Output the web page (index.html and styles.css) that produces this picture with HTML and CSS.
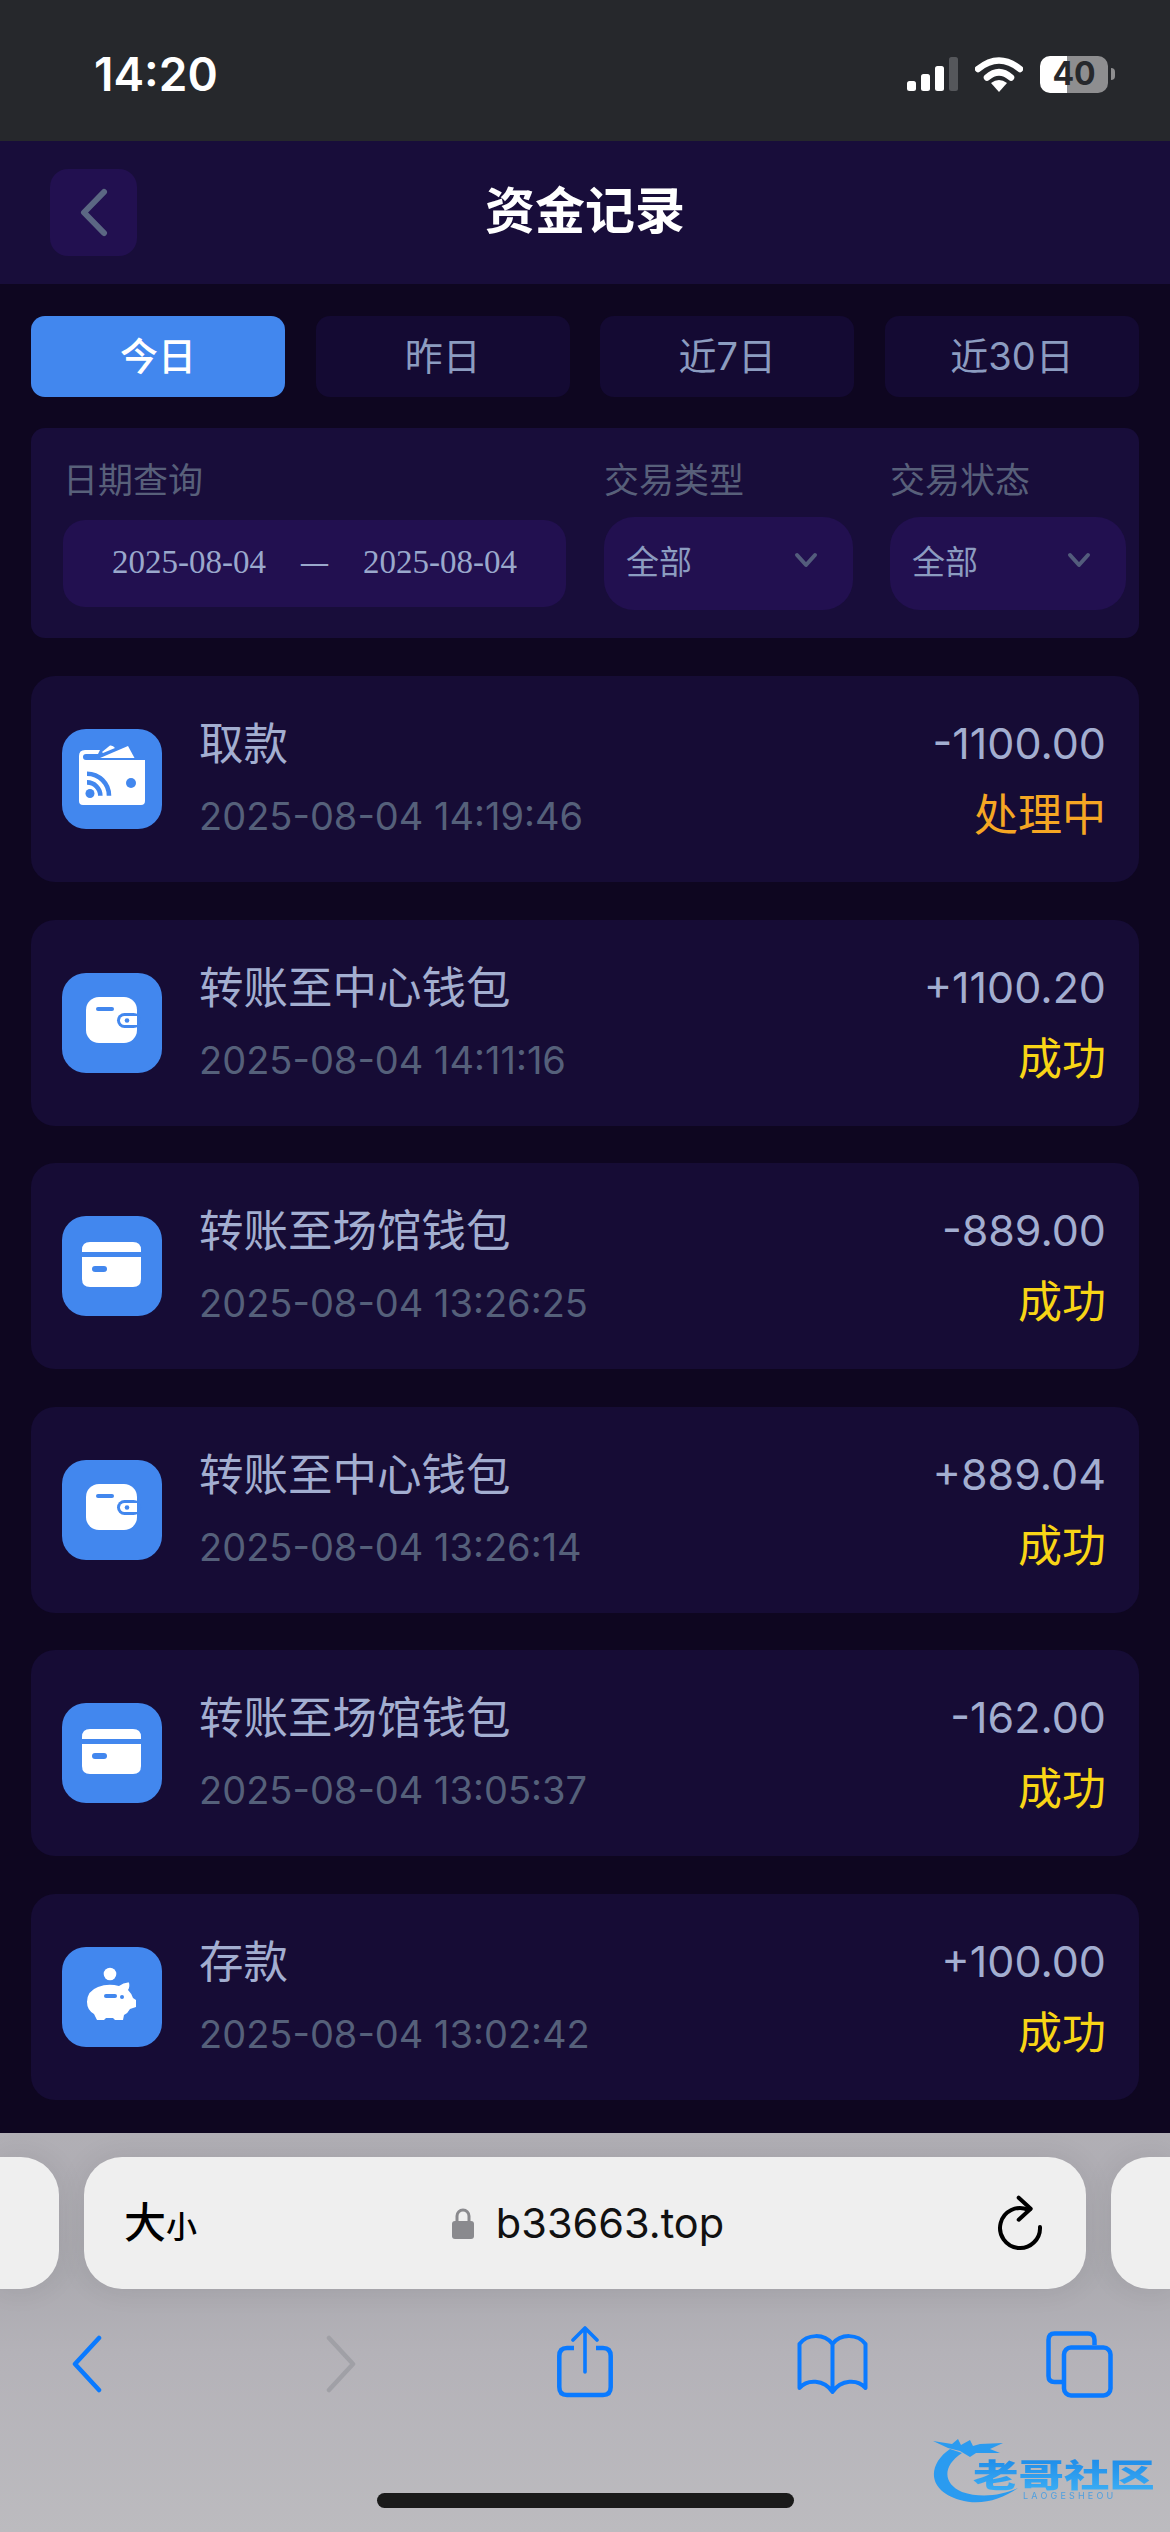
FILE: index.html
```html
<!DOCTYPE html>
<html lang="zh-CN">
<head>
    <meta charset="UTF-8">
    <meta name="viewport" content="width=device-width, initial-scale=1.0">
    <title>资金记录</title>
    <link rel="stylesheet" href="styles.css">
</head>
<body>
    <!-- Shared card icons -->
    <svg class="icon-defs" xmlns="http://www.w3.org/2000/svg">
        <symbol id="icon-withdraw" viewBox="0 0 100 100">
            <path d="M17 34 V27 Q17 21 23 21 H38 L36 25 H24 Q21 25 21 28 Q21 31 24 31 H83 Q83 31 83 36 V72 Q83 76 79 76 H21 Q17 76 17 72 Z" fill="#fff"/>
            <path d="M38 29 L66 17 L72.5 29 Z" fill="#fff"/>
            <path d="M40 23 L48 16.5 Q51 16 53 19 L41 24 Z" fill="#fff"/>
            <circle cx="69" cy="54" r="5" fill="#4287ee"/>
            <circle cx="28" cy="64.5" r="4.5" fill="#4287ee"/>
            <path d="M25 44.7 A22 22 0 0 1 47 66.7 M25 53.4 A13.3 13.3 0 0 1 38.3 66.7" fill="none" stroke="#4287ee" stroke-width="4.6"/>
        </symbol>
        <symbol id="icon-wallet" viewBox="0 0 100 100">
            <rect x="24" y="24" width="51" height="46" rx="13" fill="#fff"/>
            <rect x="34" y="34" width="18" height="4" rx="2" fill="#4287ee"/>
            <rect x="55" y="40" width="24" height="15" rx="7.5" fill="#4287ee"/>
            <path d="M75 43 H62.5 A4.5 4.5 0 0 0 62.5 52 H75 Z" fill="#fff"/>
            <circle cx="65" cy="47.5" r="2.3" fill="#4287ee"/>
        </symbol>
        <symbol id="icon-card" viewBox="0 0 100 100">
            <path d="M20 36 V34 Q20 26 28 26 H71 Q79 26 79 34 V36 Z" fill="#fff"/>
            <path d="M20 41 H79 V63 Q79 71 71 71 H28 Q20 71 20 63 Z" fill="#fff"/>
            <rect x="30" y="50" width="15" height="6" rx="3" fill="#4287ee"/>
        </symbol>
        <symbol id="icon-piggy" viewBox="0 0 100 100">
            <circle cx="48" cy="27" r="6.3" fill="#fff"/>
            <path d="M25 55 Q25 44 36 40 Q46 36 57 39 Q62 35 67 35.5 Q68 40 66 43 Q70 47 71 51 L74 53 V60 L68 62 Q66 66 62 68 L61 73 H53 L51 71 H44 L42 73 H35 L32 67 Q25 63 25 55 Z" fill="#fff"/>
            <rect x="42" y="47" width="13" height="4" rx="2" fill="#4287ee"/>
            <circle cx="60" cy="50" r="2" fill="#4287ee"/>
        </symbol>
    </svg>

    <!-- Phone status bar -->
    <div class="status-bar">
        <span class="status-time">14:20</span>
        <div class="status-icons">
            <svg class="signal" viewBox="0 0 51 34" xmlns="http://www.w3.org/2000/svg">
                <rect x="0" y="24" width="9" height="10" rx="2.5" fill="#fff"/>
                <rect x="14" y="17" width="9" height="17" rx="2.5" fill="#fff"/>
                <rect x="28" y="9" width="9" height="25" rx="2.5" fill="#fff"/>
                <rect x="42" y="0" width="9" height="34" rx="2.5" fill="#55575b"/>
            </svg>
            <svg class="wifi" viewBox="0 0 48 36" xmlns="http://www.w3.org/2000/svg">
                <path d="M3 13 Q24 -4 45 13" fill="none" stroke="#fff" stroke-width="6.5" stroke-linecap="round"/>
                <path d="M12 21.5 Q24 11 36 21.5" fill="none" stroke="#fff" stroke-width="6.5" stroke-linecap="round"/>
                <path d="M16 27 Q24 21 32 27 L24 36 Z" fill="#fff"/>
            </svg>
            <div class="battery">
                <div class="battery-cell"><span class="battery-level">40</span></div>
                <div class="battery-nub"></div>
            </div>
        </div>
    </div>

    <!-- Header -->
    <header class="page-header">
        <button class="back-btn">
            <svg viewBox="0 0 31 49" xmlns="http://www.w3.org/2000/svg">
                <path d="M26 4 L6 24.5 L26 45" fill="none" stroke="#5b6783" stroke-width="6" stroke-linecap="round" stroke-linejoin="round"/>
            </svg>
        </button>
        <h1 class="page-title">资金记录</h1>
    </header>

    <main class="page-body">
        <!-- Date tabs -->
        <div class="tabs">
            <div class="tab tab-active">今日</div>
            <div class="tab">昨日</div>
            <div class="tab">近7日</div>
            <div class="tab">近30日</div>
        </div>

        <!-- Filters -->
        <section class="filters">
            <div class="filter filter-date">
                <label class="filter-label">日期查询</label>
                <div class="date-range">
                    <span>2025-08-04</span>
                    <span class="date-dash">—</span>
                    <span>2025-08-04</span>
                </div>
            </div>
            <div class="filter filter-type">
                <label class="filter-label">交易类型</label>
                <div class="select">
                    <span>全部</span>
                    <svg class="select-arrow" viewBox="0 0 24 16" xmlns="http://www.w3.org/2000/svg"><path d="M3 3 L12 13 L21 3" fill="none" stroke="#535c7c" stroke-width="4" stroke-linecap="round" stroke-linejoin="round"/></svg>
                </div>
            </div>
            <div class="filter filter-status">
                <label class="filter-label">交易状态</label>
                <div class="select">
                    <span>全部</span>
                    <svg class="select-arrow" viewBox="0 0 24 16" xmlns="http://www.w3.org/2000/svg"><path d="M3 3 L12 13 L21 3" fill="none" stroke="#535c7c" stroke-width="4" stroke-linecap="round" stroke-linejoin="round"/></svg>
                </div>
            </div>
        </section>

        <!-- Records -->
        <section class="records">
            <article class="record">
                <svg class="record-icon"><use href="#icon-withdraw"/></svg>
                <div class="record-info">
                    <div class="record-title">取款</div>
                    <div class="record-date">2025-08-04 14:19:46</div>
                </div>
                <div class="record-side">
                    <div class="record-amount">-1100.00</div>
                    <div class="record-status pending">处理中</div>
                </div>
            </article>
            <article class="record">
                <svg class="record-icon"><use href="#icon-wallet"/></svg>
                <div class="record-info">
                    <div class="record-title">转账至中心钱包</div>
                    <div class="record-date">2025-08-04 14:11:16</div>
                </div>
                <div class="record-side">
                    <div class="record-amount">+1100.20</div>
                    <div class="record-status success">成功</div>
                </div>
            </article>
            <article class="record">
                <svg class="record-icon"><use href="#icon-card"/></svg>
                <div class="record-info">
                    <div class="record-title">转账至场馆钱包</div>
                    <div class="record-date">2025-08-04 13:26:25</div>
                </div>
                <div class="record-side">
                    <div class="record-amount">-889.00</div>
                    <div class="record-status success">成功</div>
                </div>
            </article>
            <article class="record">
                <svg class="record-icon"><use href="#icon-wallet"/></svg>
                <div class="record-info">
                    <div class="record-title">转账至中心钱包</div>
                    <div class="record-date">2025-08-04 13:26:14</div>
                </div>
                <div class="record-side">
                    <div class="record-amount">+889.04</div>
                    <div class="record-status success">成功</div>
                </div>
            </article>
            <article class="record">
                <svg class="record-icon"><use href="#icon-card"/></svg>
                <div class="record-info">
                    <div class="record-title">转账至场馆钱包</div>
                    <div class="record-date">2025-08-04 13:05:37</div>
                </div>
                <div class="record-side">
                    <div class="record-amount">-162.00</div>
                    <div class="record-status success">成功</div>
                </div>
            </article>
            <article class="record">
                <svg class="record-icon"><use href="#icon-piggy"/></svg>
                <div class="record-info">
                    <div class="record-title">存款</div>
                    <div class="record-date">2025-08-04 13:02:42</div>
                </div>
                <div class="record-side">
                    <div class="record-amount">+100.00</div>
                    <div class="record-status success">成功</div>
                </div>
            </article>
        </section>
    </main>

    <!-- Browser chrome -->
    <footer class="browser">
        <div class="address-row">
            <div class="address-pill address-prev"></div>
            <div class="address-pill address-main">
                <div class="text-size"><span class="text-big">大</span><span class="text-small">小</span></div>
                <div class="address-url">
                    <svg class="lock" viewBox="0 0 22 32" xmlns="http://www.w3.org/2000/svg">
                        <path d="M5 15 V9 A6 6 0 0 1 17 9 V15" fill="none" stroke="#8a8a8e" stroke-width="3"/>
                        <rect x="0" y="14" width="22" height="18" rx="3" fill="#8a8a8e"/>
                    </svg>
                    <span>b33663.top</span>
                </div>
                <svg class="reload" viewBox="0 0 50 58" xmlns="http://www.w3.org/2000/svg">
                    <path d="M44 33 A20 20 0 1 1 32 15.7 L34 15" fill="none" stroke="#000" stroke-width="4" stroke-linecap="round"/>
                    <path d="M22.7 3.7 L34.7 14.7 L22.7 25.7" fill="none" stroke="#000" stroke-width="4" stroke-linecap="round" stroke-linejoin="round"/>
                </svg>
            </div>
            <div class="address-pill address-next"></div>
        </div>

        <nav class="toolbar">
            <svg class="tool tool-nav" viewBox="0 0 30 72" xmlns="http://www.w3.org/2000/svg">
                <path d="M27 12 L3 38 L27 64" fill="none" stroke="#0a7aff" stroke-width="4.5" stroke-linecap="round" stroke-linejoin="round"/>
            </svg>
            <svg class="tool tool-nav" viewBox="0 0 30 72" xmlns="http://www.w3.org/2000/svg">
                <path d="M3 12 L27 38 L3 64" fill="none" stroke="#a0a0a6" stroke-width="4.5" stroke-linecap="round" stroke-linejoin="round"/>
            </svg>
            <svg class="tool tool-share" viewBox="0 0 56 72" xmlns="http://www.w3.org/2000/svg">
                <path d="M17 22 H10 Q2.3 22 2.3 30 V61 Q2.3 69 10 69 H46 Q53.7 69 53.7 61 V30 Q53.7 22 46 22 H39" fill="none" stroke="#0a7aff" stroke-width="4.5"/>
                <path d="M28 2 V46 M16 14 L28 2 L40 14" fill="none" stroke="#0a7aff" stroke-width="3.6" stroke-linecap="round" stroke-linejoin="round"/>
            </svg>
            <svg class="tool tool-book" viewBox="0 0 71 72" xmlns="http://www.w3.org/2000/svg">
                <path d="M35.5 18 C27 7 10 8 2.5 18 V62 C10 53 27 53 35.5 66 C44 53 61 53 68.5 62 V18 C61 8 44 7 35.5 18 V66" fill="none" stroke="#0a7aff" stroke-width="4" stroke-linecap="round" stroke-linejoin="round"/>
            </svg>
            <svg class="tool tool-tabs" viewBox="0 0 67 72" xmlns="http://www.w3.org/2000/svg">
                <path d="M48.5 19 V14 Q48.5 7.5 42 7.5 H8.5 Q2.5 7.5 2.5 14 V50 Q2.5 56 8.5 56 H18" fill="none" stroke="#0a7aff" stroke-width="4.5"/>
                <rect x="18" y="21.5" width="46.5" height="48" rx="7" fill="none" stroke="#0a7aff" stroke-width="4.5"/>
            </svg>
        </nav>

        <div class="home-indicator"></div>
    </footer>

    <!-- Watermark over the browser bar -->
    <div class="watermark">
        <svg class="watermark-dragon" viewBox="0 0 270 112" xmlns="http://www.w3.org/2000/svg">
            <path d="M50 29 C28 44 26 70 60 80 C80 86 100 80 118 68 C100 76 80 78 62 72 C43 64 42 46 62 33 Z" fill="#2a9bf0"/>
            <path d="M33 21 L52 24 L58 19 L61 25 L70 20 L73 26 L80 24 L103 23 L90 29 L100 33 L76 33 L70 37 L60 31 L48 28 Z" fill="#2a9bf0"/>
        </svg>
        <span class="watermark-name">老哥社区</span>
        <span class="watermark-sub">LAOGESHEOU</span>
    </div>
</body>
</html>
```

FILE: styles.css
```css
* {
    margin: 0;
    padding: 0;
    box-sizing: border-box;
}

body {
    width: 1170px;
    height: 2532px;
    display: flex;
    flex-direction: column;
    position: relative;
    overflow: hidden;
    background: #0e0620;
    font-family: 'Inter', 'Noto Sans CJK SC', sans-serif;
}

.icon-defs {
    display: none;
}

/* Status bar */
.status-bar {
    height: 141px;
    flex-shrink: 0;
    display: flex;
    justify-content: space-between;
    align-items: center;
    padding: 7px 55px 0 94px;
    background: #26282c;
}

.status-time {
    color: #fff;
    font-size: 46px;
    font-weight: 600;
    line-height: 1;
}

.status-icons {
    display: flex;
    align-items: center;
    gap: 17px;
}

.signal {
    width: 51px;
    height: 34px;
}

.wifi {
    width: 48px;
    height: 36px;
}

.battery {
    display: flex;
    align-items: center;
    gap: 3px;
}

.battery-cell {
    width: 68px;
    height: 37px;
    display: flex;
    justify-content: center;
    align-items: center;
    border-radius: 10px;
    background: linear-gradient(90deg, #fff 0%, #fff 40%, #8e8e90 40%, #8e8e90 100%);
}

.battery-level {
    color: #26282c;
    font-size: 32px;
    font-weight: 700;
    line-height: 1;
}

.battery-nub {
    width: 4px;
    height: 12px;
    border-radius: 0 6px 6px 0;
    background: #8e8e90;
}

/* Header */
.page-header {
    height: 143px;
    flex-shrink: 0;
    display: grid;
    grid-template-columns: 137px 1fr 137px;
    align-items: center;
    padding-left: 50px;
    background: #180d3a;
}

.back-btn {
    width: 87px;
    height: 87px;
    display: flex;
    justify-content: center;
    align-items: center;
    border: none;
    border-radius: 18px;
    background: #221050;
}

.back-btn svg {
    width: 31px;
    height: 49px;
}

.page-title {
    grid-column: 2;
    margin-left: -50px;
    padding-bottom: 3px;
    text-align: center;
    color: #fff;
    font-size: 50px;
    font-weight: 700;
    line-height: 1;
}

/* Body */
.page-body {
    height: 1849px;
    flex-shrink: 0;
    overflow: hidden;
    padding: 32px 31px 0;
}

.tabs {
    display: grid;
    grid-template-columns: repeat(4, 254px);
    justify-content: space-between;
}

.tab {
    height: 81px;
    display: flex;
    justify-content: center;
    align-items: center;
    padding-bottom: 6px;
    border-radius: 14px;
    background: #140a33;
    color: #8c9cc0;
    font-size: 38px;
}

.tab-active {
    background: #4287ee;
    color: #fff;
    font-weight: 500;
}

/* Filters */
.filters {
    height: 210px;
    margin-top: 31px;
    display: flex;
    padding: 32px 13px 0 32px;
    border-radius: 14px;
    background: #180d3a;
}

.filter-date {
    width: 503px;
    margin-right: 38px;
}

.filter-type {
    width: 249px;
    margin-right: 37px;
}

.filter-status {
    width: 236px;
}

.filter-label {
    display: block;
    height: 40px;
    line-height: 40px;
    color: #58607a;
    font-size: 35px;
}

.date-range {
    height: 87px;
    margin-top: 20px;
    display: flex;
    justify-content: center;
    align-items: center;
    gap: 35px;
    padding-bottom: 2px;
    border-radius: 22px;
    background: #221050;
    color: #9aa8cc;
    font-family: 'Liberation Serif', serif;
    font-size: 33px;
}

.date-dash {
    font-size: 27px;
    font-weight: 700;
}

.select {
    height: 93px;
    margin-top: 17px;
    display: flex;
    justify-content: space-between;
    align-items: center;
    padding: 0 35px 8px 22px;
    border-radius: 30px;
    background: #221050;
    color: #8c9cc0;
    font-size: 33px;
}

.select-arrow {
    width: 24px;
    height: 16px;
}

/* Records */
.records {
    margin-top: 38px;
    display: flex;
    flex-direction: column;
    gap: 37.6px;
}

.record {
    height: 206px;
    flex-shrink: 0;
    display: flex;
    align-items: center;
    padding: 0 33px 0 31px;
    border-radius: 24px;
    background: #160c35;
}

.record-icon {
    width: 100px;
    height: 100px;
    flex-shrink: 0;
    margin-right: 37px;
    border-radius: 24px;
    background: #4287ee;
}

.record-info {
    flex: 1;
    padding-bottom: 6px;
}

.record-title {
    height: 60px;
    line-height: 60px;
    color: #a3aed0;
    font-size: 44.5px;
}

.record-date {
    height: 44px;
    margin-top: 20px;
    line-height: 44px;
    color: #55607a;
    font-size: 38px;
}

.record-side {
    text-align: right;
}

.record-amount {
    height: 60px;
    line-height: 60px;
    color: #a3aed0;
    font-size: 43px;
}

.record-status {
    height: 60px;
    margin-top: 12px;
    line-height: 60px;
    font-size: 44px;
}

.pending {
    color: #f5a623;
}

.success {
    color: #f8d516;
}

/* Browser chrome */
.browser {
    flex: 1;
    padding-top: 24px;
    background: linear-gradient(180deg, #b1afb5 0%, #abaab0 35%, #b4b2b8 55%, #bcbbbf 100%);
}

.address-row {
    display: flex;
    gap: 25px;
}

.address-pill {
    height: 132px;
    flex-shrink: 0;
    background: #efefef;
    box-shadow: 0 0 30px rgba(0, 0, 0, 0.08);
}

.address-prev {
    width: 59px;
    border-radius: 0 38px 38px 0;
}

.address-next {
    width: 59px;
    border-radius: 38px 0 0 38px;
}

.address-main {
    width: 1002px;
    display: grid;
    grid-template-columns: 1fr auto 1fr;
    align-items: center;
    padding: 0 40px;
    border-radius: 38px;
}

.text-size {
    color: #000;
    font-weight: 500;
    line-height: 1;
}

.text-big {
    font-size: 42px;
}

.text-small {
    font-size: 31px;
}

.address-url {
    display: flex;
    align-items: center;
    gap: 22px;
    margin-left: 6px;
    color: #111;
    font-size: 41.5px;
}

.lock {
    width: 22px;
    height: 32px;
}

.reload {
    width: 50px;
    height: 58px;
    justify-self: end;
}

.toolbar {
    height: 72px;
    margin-top: 37px;
    display: grid;
    grid-template-columns: 254px 231px 240px 249px auto;
    justify-items: start;
    padding-left: 72px;
}

.tool {
    height: 72px;
}

.tool-nav {
    width: 30px;
}

.tool-share {
    width: 56px;
}

.tool-book {
    width: 71px;
}

.tool-tabs {
    width: 67px;
}

.home-indicator {
    width: 417px;
    height: 15px;
    margin: 95px auto 0;
    border-radius: 8px;
    background: #1a1a1a;
}

/* Watermark */
.watermark {
    position: absolute;
    left: 900px;
    top: 2420px;
    width: 270px;
    height: 112px;
    filter: blur(0.5px);
}

.watermark-dragon {
    position: absolute;
    left: 0;
    top: 0;
    width: 270px;
    height: 112px;
}

.watermark-name {
    position: absolute;
    left: 73px;
    top: 36px;
    width: 130px;
    height: 40px;
    transform: scaleX(1.42);
    transform-origin: left center;
    background: linear-gradient(180deg, #1d8ae8 0%, #3fb2f6 100%);
    -webkit-background-clip: text;
    background-clip: text;
    color: transparent;
    font-size: 32px;
    font-weight: 900;
    line-height: 40px;
    white-space: nowrap;
}

.watermark-sub {
    position: absolute;
    left: 123px;
    top: 71px;
    color: #4d9fe0;
    font-size: 9px;
    letter-spacing: 3.2px;
    line-height: 9px;
}
```
